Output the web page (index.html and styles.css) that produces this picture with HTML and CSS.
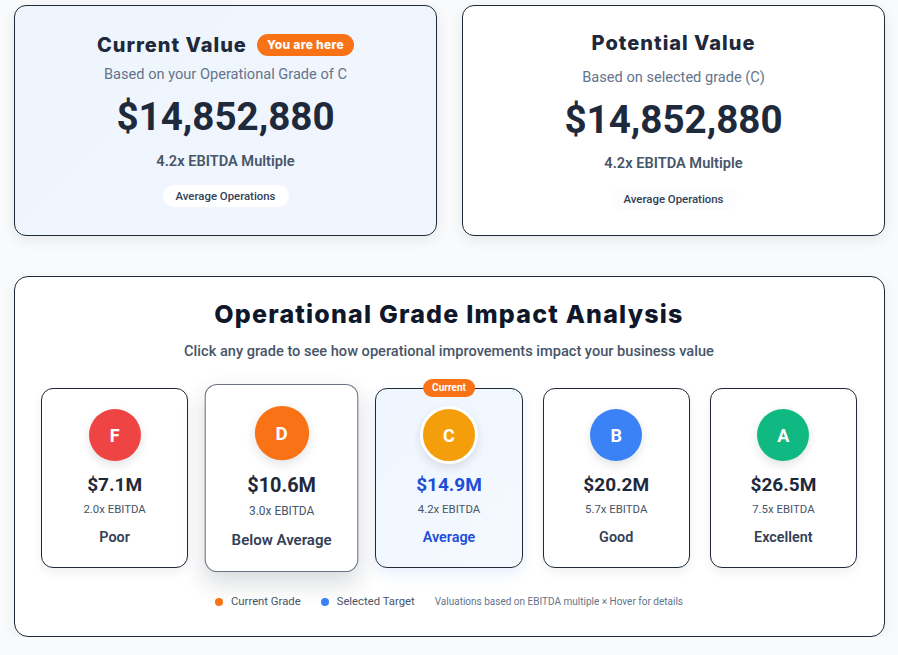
FILE: index.html
```html
<!DOCTYPE html>
<html lang="en">
<head>
<meta charset="utf-8">
<title>Valuation</title>
<link rel="stylesheet" href="styles.css">
</head>
<body>
<div class="page">
  <div class="top-grid">
    <section class="value-card value-card--current">
      <div class="title-row">
        <h2 class="card-title">Current Value</h2>
        <span class="here-badge">You are here</span>
      </div>
      <p class="card-sub card-sub--current">Based on your Operational Grade of C</p>
      <div class="card-value card-value--current">$14,852,880</div>
      <div class="card-multiple card-multiple--current">4.2x EBITDA Multiple</div>
      <span class="ops-pill ops-pill--current">Average Operations</span>
    </section>
    <section class="value-card value-card--potential">
      <h2 class="card-title card-title--potential">Potential Value</h2>
      <p class="card-sub card-sub--potential">Based on selected grade (C)</p>
      <div class="card-value card-value--potential">$14,852,880</div>
      <div class="card-multiple card-multiple--potential">4.2x EBITDA Multiple</div>
      <span class="ops-pill ops-pill--potential">Average Operations</span>
    </section>
  </div>

  <section class="impact-card">
    <h1 class="impact-title">Operational Grade Impact Analysis</h1>
    <p class="impact-sub">Click any grade to see how operational improvements impact your business value</p>
    <div class="grade-row">
      <div class="grade-card">
        <div class="grade-circle grade-f">F</div>
        <div class="grade-value">$7.1M</div>
        <div class="grade-mult">2.0x EBITDA</div>
        <div class="grade-label">Poor</div>
      </div>
      <div class="grade-card grade-card--hover">
        <div class="grade-circle grade-d">D</div>
        <div class="grade-value">$10.6M</div>
        <div class="grade-mult">3.0x EBITDA</div>
        <div class="grade-label">Below Average</div>
      </div>
      <div class="grade-card grade-card--current">
        <span class="current-badge">Current</span>
        <div class="grade-circle grade-c grade-circle--ring">C</div>
        <div class="grade-value grade-value--sel">$14.9M</div>
        <div class="grade-mult">4.2x EBITDA</div>
        <div class="grade-label grade-label--sel">Average</div>
      </div>
      <div class="grade-card">
        <div class="grade-circle grade-b">B</div>
        <div class="grade-value">$20.2M</div>
        <div class="grade-mult">5.7x EBITDA</div>
        <div class="grade-label">Good</div>
      </div>
      <div class="grade-card">
        <div class="grade-circle grade-a">A</div>
        <div class="grade-value">$26.5M</div>
        <div class="grade-mult">7.5x EBITDA</div>
        <div class="grade-label">Excellent</div>
      </div>
    </div>
    <div class="legend">
      <span class="legend-item"><span class="dot dot--orange"></span>Current Grade</span>
      <span class="legend-item"><span class="dot dot--blue"></span>Selected Target</span>
      <span class="legend-note">Valuations based on EBITDA multiple × Hover for details</span>
    </div>
  </section>
</div>
</body>
</html>
```

FILE: styles.css
```css
* { box-sizing: border-box; }
html, body { margin: 0; padding: 0; }
body {
  background: #f8fafc;
  font-family: Roboto, "Liberation Sans", Arial, sans-serif;
  color: #1e293b;
}
.page {
  width: 898px;
  padding: 5px 13px 0 14px;
}
.top-grid {
  display: grid;
  grid-template-columns: 1fr 1fr;
  gap: 25px;
}
.value-card {
  border: 1px solid #1f2937;
  border-radius: 12px;
  height: 231px;
  display: flex;
  flex-direction: column;
  align-items: center;
  text-align: center;
  box-shadow: 0 4px 14px rgba(15, 23, 42, 0.08);
}
.value-card--current {
  background: linear-gradient(135deg, #eff5fd 0%, #f1f6fd 100%);
  padding-top: 25px;
}
.value-card--potential {
  background: #ffffff;
  padding-top: 23px;
}
.title-row {
  display: flex;
  align-items: center;
  gap: 10px;
  height: 28px;
}
.card-title {
  margin: 0;
  font-family: Inter, "DejaVu Sans", sans-serif;
  font-weight: 800;
  font-size: 20px;
  letter-spacing: 1px;
  line-height: 28px;
  color: #1e293b;
}
.here-badge {
  background: #f97316;
  color: #fff;
  font-family: Inter, "DejaVu Sans", sans-serif;
  font-weight: 800;
  font-size: 12px;
  letter-spacing: 0.3px;
  line-height: 22px;
  height: 22px;
  padding: 0 10px;
  border-radius: 11px;
}
.card-sub {
  margin: 0;
  font-size: 14.6px;
  line-height: 20px;
  color: #64748b;
}
.card-sub--current { margin-top: 5px; }
.card-sub--potential { margin-top: 10px; }
.card-value {
  font-weight: 700;
  font-size: 38.6px;
  line-height: 46px;
  color: #1e293b;
}
.card-value--current { margin-top: 10px; }
.card-value--potential { margin-top: 10px; }
.card-multiple {
  font-size: 14.6px;
  font-weight: 600;
  line-height: 20px;
  color: #475569;
}
.card-multiple--current { margin-top: 11px; }
.card-multiple--potential { margin-top: 10px; }
.ops-pill {
  display: inline-block;
  font-size: 11.4px;
  font-weight: 500;
  line-height: 14px;
  padding: 4px 13px;
  border-radius: 11px;
  color: #334155;
}
.ops-pill--current { margin-top: 14px; background: #ffffff; }
.ops-pill--potential { margin-top: 15px; background: #fbfcfd; }

.impact-card {
  margin-top: 40px;
  height: 361px;
  background: #ffffff;
  border: 1px solid #1f2937;
  border-radius: 14px;
  padding: 21px 27px 0 26px;
  text-align: center;
  box-shadow: 0 4px 14px rgba(15, 23, 42, 0.06);
}
.impact-title {
  margin: 0;
  font-family: Inter, "DejaVu Sans", sans-serif;
  font-weight: 800;
  font-size: 25px;
  letter-spacing: 1.2px;
  line-height: 32px;
  color: #0f172a;
}
.impact-sub {
  margin: 11px 0 0;
  font-size: 14.6px;
  line-height: 20px;
  font-weight: 500;
  color: #475569;
}
.grade-row {
  margin-top: 27px;
  display: flex;
  gap: 20px;
}
.grade-card {
  position: relative;
  flex: 1 1 0;
  height: 180px;
  border: 1px solid #1f2937;
  border-radius: 12px;
  background: #ffffff;
  padding-top: 20px;
  display: flex;
  flex-direction: column;
  align-items: center;
  box-shadow: 0 4px 10px rgba(15, 23, 42, 0.07);
}
.grade-card--hover {
  transform: scale(1.045);
  border-color: #6b7280;
  box-shadow: 0 10px 22px rgba(15, 23, 42, 0.16);
}
.grade-card--current {
  background: linear-gradient(135deg, #eff6ff 0%, #f5f9ff 100%);
  box-shadow: 0 6px 14px rgba(59, 130, 246, 0.12);
}
.current-badge {
  position: absolute;
  top: -10px;
  left: 50%;
  transform: translateX(-50%);
  background: #f97316;
  color: #fff;
  font-size: 10px;
  font-weight: 700;
  line-height: 18px;
  padding: 0 9px;
  border-radius: 9px;
}
.grade-circle {
  width: 52px;
  height: 52px;
  border-radius: 50%;
  display: flex;
  align-items: center;
  justify-content: center;
  color: #fff;
  font-weight: 700;
  font-size: 18px;
  box-shadow: 0 4px 10px rgba(15, 23, 42, 0.12);
}
.grade-circle--ring {
  width: 58px;
  height: 58px;
  margin-top: -3px;
  margin-bottom: -3px;
  border: 3px solid #ffffff;
}
.grade-f { background: #ef4444; }
.grade-d { background: #f97316; }
.grade-c { background: #f59e0b; }
.grade-b { background: #3b82f6; }
.grade-a { background: #10b981; }
.grade-value {
  margin-top: 12px;
  font-size: 19px;
  font-weight: 700;
  line-height: 24px;
  color: #1e293b;
}
.grade-value--sel { color: #1d4ed8; }
.grade-mult {
  margin-top: 4px;
  font-size: 11.4px;
  line-height: 16px;
  color: #475569;
}
.grade-label {
  margin-top: 11px;
  font-size: 14.4px;
  font-weight: 600;
  line-height: 20px;
  color: #334155;
}
.grade-label--sel { color: #1d4ed8; }
.legend {
  margin-top: 26px;
  display: flex;
  justify-content: center;
  align-items: center;
  gap: 20px;
  font-size: 11.3px;
  line-height: 16px;
  color: #475569;
}
.legend-item {
  display: flex;
  align-items: center;
  gap: 8px;
}
.dot {
  width: 8px;
  height: 8px;
  border-radius: 50%;
  display: inline-block;
}
.dot--orange { background: #f97316; }
.dot--blue { background: #3b82f6; }
.legend-note {
  font-size: 10px;
  color: #64748b;
}
```
